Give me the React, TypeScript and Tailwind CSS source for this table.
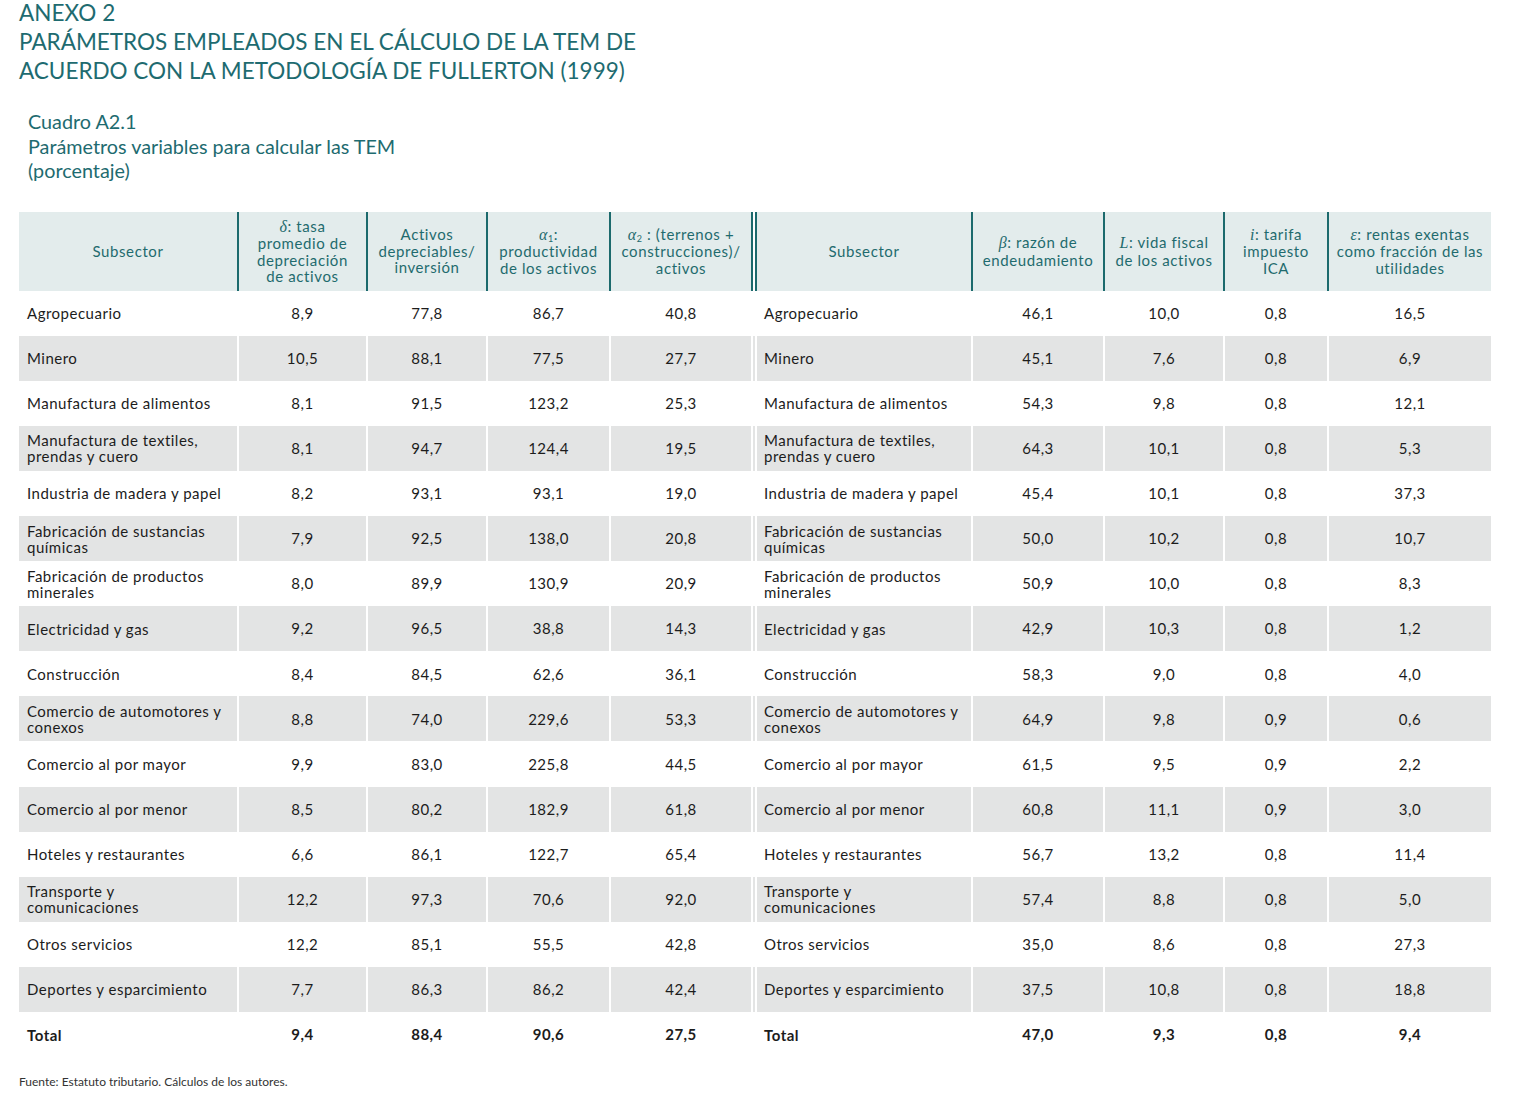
import React from "react";

type Row = { name: React.ReactNode; l: string[]; r: string[] };

const rows: Row[] = [
  { name: "Agropecuario", l: ["8,9", "77,8", "86,7", "40,8"], r: ["46,1", "10,0", "0,8", "16,5"] },
  { name: "Minero", l: ["10,5", "88,1", "77,5", "27,7"], r: ["45,1", "7,6", "0,8", "6,9"] },
  { name: "Manufactura de alimentos", l: ["8,1", "91,5", "123,2", "25,3"], r: ["54,3", "9,8", "0,8", "12,1"] },
  { name: <>Manufactura de textiles,<br />prendas y cuero</>, l: ["8,1", "94,7", "124,4", "19,5"], r: ["64,3", "10,1", "0,8", "5,3"] },
  { name: "Industria de madera y papel", l: ["8,2", "93,1", "93,1", "19,0"], r: ["45,4", "10,1", "0,8", "37,3"] },
  { name: <>Fabricación de sustancias<br />químicas</>, l: ["7,9", "92,5", "138,0", "20,8"], r: ["50,0", "10,2", "0,8", "10,7"] },
  { name: <>Fabricación de productos<br />minerales</>, l: ["8,0", "89,9", "130,9", "20,9"], r: ["50,9", "10,0", "0,8", "8,3"] },
  { name: "Electricidad y gas", l: ["9,2", "96,5", "38,8", "14,3"], r: ["42,9", "10,3", "0,8", "1,2"] },
  { name: "Construcción", l: ["8,4", "84,5", "62,6", "36,1"], r: ["58,3", "9,0", "0,8", "4,0"] },
  { name: <>Comercio de automotores y<br />conexos</>, l: ["8,8", "74,0", "229,6", "53,3"], r: ["64,9", "9,8", "0,9", "0,6"] },
  { name: "Comercio al por mayor", l: ["9,9", "83,0", "225,8", "44,5"], r: ["61,5", "9,5", "0,9", "2,2"] },
  { name: "Comercio al por menor", l: ["8,5", "80,2", "182,9", "61,8"], r: ["60,8", "11,1", "0,9", "3,0"] },
  { name: "Hoteles y restaurantes", l: ["6,6", "86,1", "122,7", "65,4"], r: ["56,7", "13,2", "0,8", "11,4"] },
  { name: <>Transporte y<br />comunicaciones</>, l: ["12,2", "97,3", "70,6", "92,0"], r: ["57,4", "8,8", "0,8", "5,0"] },
  { name: "Otros servicios", l: ["12,2", "85,1", "55,5", "42,8"], r: ["35,0", "8,6", "0,8", "27,3"] },
  { name: "Deportes y esparcimiento", l: ["7,7", "86,3", "86,2", "42,4"], r: ["37,5", "10,8", "0,8", "18,8"] },
];

const total = { l: ["9,4", "88,4", "90,6", "27,5"], r: ["47,0", "9,3", "0,8", "9,4"] };

const GRID =
  "grid grid-cols-[218px_127px_118px_121px_140px_2px_214px_130px_118px_102px_162px] gap-x-[2px]";

const G = ({ children }: { children: React.ReactNode }) => (
  <span className="italic text-[16px]" style={{ fontFamily: "'Liberation Serif', serif" }}>
    {children}
  </span>
);

function HeadCell({ children }: { children: React.ReactNode }) {
  return (
    <div className="flex items-center justify-center bg-[#e3ecec] text-center text-[15px] leading-[16.5px] tracking-[0.6px] text-[#1f6b6e]">
      <div>{children}</div>
    </div>
  );
}

function BodyRow({ row, shaded, bold }: { row: Row; shaded: boolean; bold?: boolean }) {
  const bg = shaded ? "bg-[#e3e4e4]" : "bg-white";
  const weight = bold ? "font-bold" : "";
  return (
    <div className={`${GRID} h-[45.1px] text-[15px] tracking-[0.5px] text-[#1c1c1c] ${weight}`}>
      <div className={`${bg} flex items-center pl-[8px] leading-[16px]`}>
        <div>{row.name}</div>
      </div>
      {row.l.map((v, i) => (
        <div key={"l" + i} className={`${bg} flex items-center justify-center`}>
          {v}
        </div>
      ))}
      <div className={bg} />
      <div className={`${bg} flex items-center pl-[7px] leading-[16px]`}>
        <div>{row.name}</div>
      </div>
      {row.r.map((v, i) => (
        <div key={"r" + i} className={`${bg} flex items-center justify-center`}>
          {v}
        </div>
      ))}
    </div>
  );
}

export default function App() {
  return (
    <div
      className="w-[1513px] h-[1101px] bg-white relative overflow-hidden"
      style={{ fontFamily: "Lato, 'Noto Sans', sans-serif" }}
    >
      <div className="pl-[19px] -mt-[2px] text-[#1e6b70] text-[22.5px] leading-[29px]">
        <div>ANEXO 2</div>
        <div>PARÁMETROS EMPLEADOS EN EL CÁLCULO DE LA TEM DE</div>
        <div>ACUERDO CON LA METODOLOGÍA DE FULLERTON (1999)</div>
      </div>
      <div className="pl-[28px] mt-[24px] text-[#1e6b70] text-[19.8px] leading-[24.5px]">
        <div>Cuadro A2.1</div>
        <div>Parámetros variables para calcular las TEM</div>
        <div>(porcentaje)</div>
      </div>

      <div className="ml-[19px] mt-[29px] w-[1472px]">
        <div className={`${GRID} h-[79px] bg-[#1c6a6d]`}>
          <HeadCell>Subsector</HeadCell>
          <HeadCell>
            <G>δ</G>: tasa<br />promedio de<br />depreciación<br />de activos
          </HeadCell>
          <HeadCell>
            Activos<br />depreciables/<br />inversión
          </HeadCell>
          <HeadCell>
            <G>α</G>
            <sub className="text-[9px]">1</sub>:<br />productividad<br />de los activos
          </HeadCell>
          <HeadCell>
            <G>α</G>
            <sub className="text-[9px]">2</sub> : (terrenos +<br />construcciones)/<br />activos
          </HeadCell>
          <div className="bg-white" />
          <HeadCell>Subsector</HeadCell>
          <HeadCell>
            <G>β</G>: razón de<br />endeudamiento
          </HeadCell>
          <HeadCell>
            <G>L</G>: vida fiscal<br />de los activos
          </HeadCell>
          <HeadCell>
            <G>i</G>: tarifa<br />impuesto<br />ICA
          </HeadCell>
          <HeadCell>
            <G>ε</G>: rentas exentas<br />como fracción de las<br />utilidades
          </HeadCell>
        </div>
        {rows.map((r, i) => (
          <BodyRow key={i} row={r} shaded={i % 2 === 1} />
        ))}
        <BodyRow row={{ name: "Total", l: total.l, r: total.r }} shaded={false} bold />
      </div>

      <div className="pl-[19px] mt-[16px] text-[12px] text-[#333]">
        Fuente: Estatuto tributario. Cálculos de los autores.
      </div>
    </div>
  );
}
